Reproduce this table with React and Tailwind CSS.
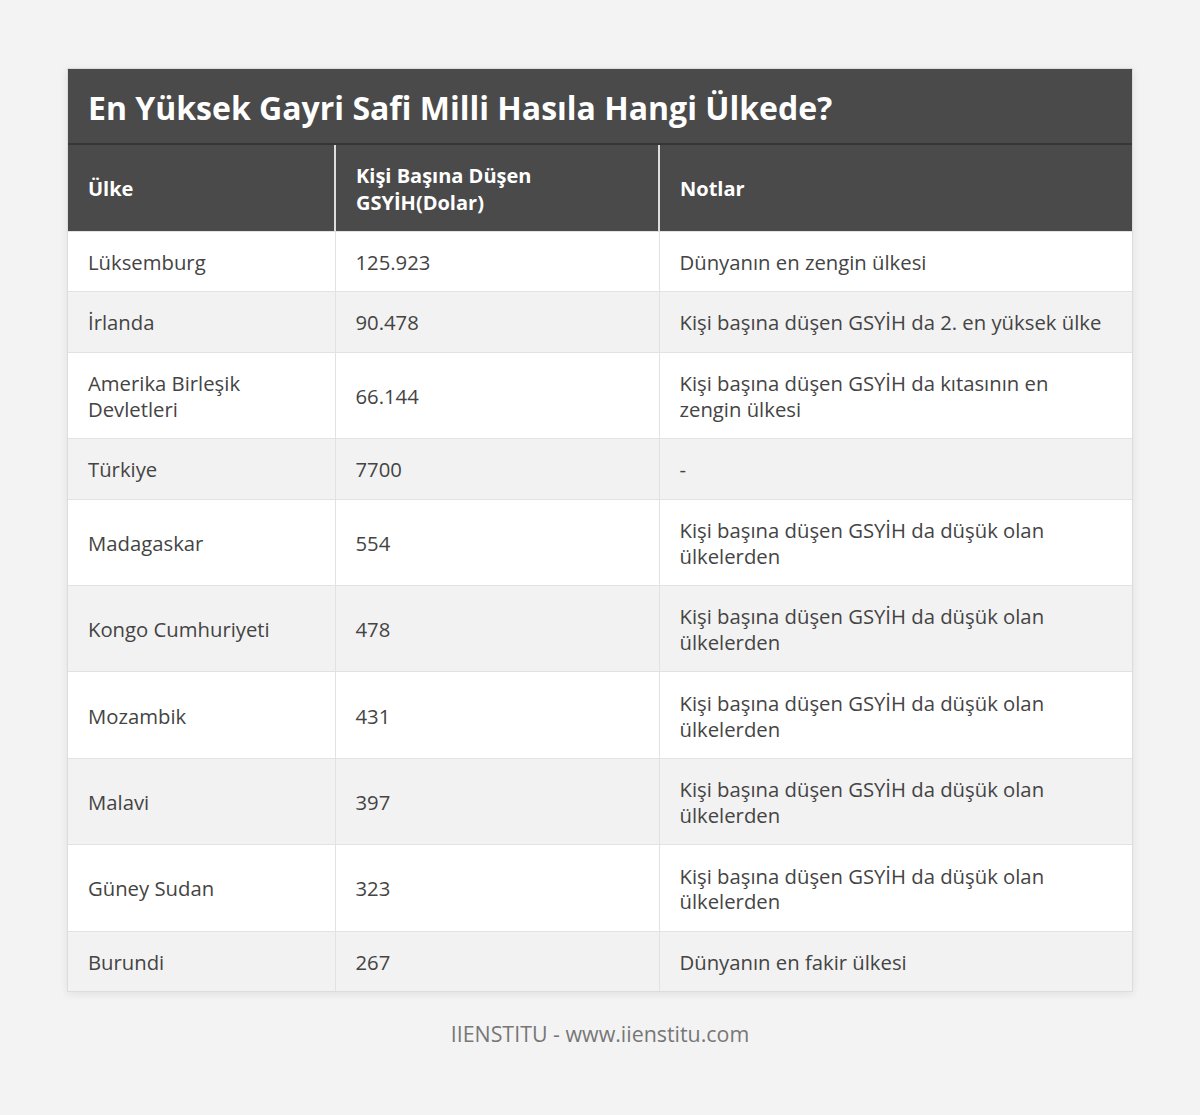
const rows = [
  ["Lüksemburg", "125.923", "Dünyanın en zengin ülkesi"],
  ["İrlanda", "90.478", "Kişi başına düşen GSYİH da 2. en yüksek ülke"],
  ["Amerika Birleşik Devletleri", "66.144", "Kişi başına düşen GSYİH da kıtasının en zengin ülkesi"],
  ["Türkiye", "7700", "-"],
  ["Madagaskar", "554", "Kişi başına düşen GSYİH da düşük olan ülkelerden"],
  ["Kongo Cumhuriyeti", "478", "Kişi başına düşen GSYİH da düşük olan ülkelerden"],
  ["Mozambik", "431", "Kişi başına düşen GSYİH da düşük olan ülkelerden"],
  ["Malavi", "397", "Kişi başına düşen GSYİH da düşük olan ülkelerden"],
  ["Güney Sudan", "323", "Kişi başına düşen GSYİH da düşük olan ülkelerden"],
  ["Burundi", "267", "Dünyanın en fakir ülkesi"],
]

export default function App() {
  return (
    <div className="min-h-[1115px] bg-[#f3f3f3] pt-[68px] font-['Open_Sans',sans-serif]">

      <div className="mx-[67px] border border-[#dcdcdc] bg-white shadow-[0_2px_8px_rgba(0,0,0,0.08)]">

        {/* title */}
        <div className="bg-[#4a4a4a] border-b-2 border-[#363636] px-5 h-[76px] flex items-center">
          <h1 className="text-white font-bold text-[32px] leading-none pt-[3px]">
            En Yüksek Gayri Safi Milli Hasıla Hangi Ülkede?
          </h1>
        </div>

        <table className="w-full border-collapse table-fixed">
          <colgroup>
            <col className="w-[267px]" />
            <col className="w-[324px]" />
            <col />
          </colgroup>
          <thead>
            <tr className="bg-[#4a4a4a] text-white text-[20px] font-bold leading-[27px] text-left h-[86px]">
              <th className="px-5 pt-[2px] border-r-2 border-[#dddddd]">Ülke</th>
              <th className="px-5 pt-[2px] border-r-2 border-[#dddddd]">Kişi Başına Düşen GSYİH(Dolar)</th>
              <th className="px-5 pt-[2px]">Notlar</th>
            </tr>
          </thead>
          <tbody>
            {rows.map((r, i) => (
              <tr
                key={i}
                className={(i % 2 ? "bg-[#f2f2f2]" : "bg-white") + " border-t border-[#e2e2e2] text-[#444] text-[20.3px] leading-[25.8px]"}
              >
                <td className="px-5 pt-[18.3px] pb-[15.5px] border-r border-[#e2e2e2]">{r[0]}</td>
                <td className="px-5 pt-[18.3px] pb-[15.5px] border-r border-[#e2e2e2]">{r[1]}</td>
                <td className="px-5 pt-[18.3px] pb-[15.5px]">{r[2]}</td>
              </tr>
            ))}
          </tbody>
        </table>

      </div>

      <div className="text-center text-[#777] text-[21.4px] mt-[26px]">
        IIENSTITU - www.iienstitu.com
      </div>

    </div>
  )
}
